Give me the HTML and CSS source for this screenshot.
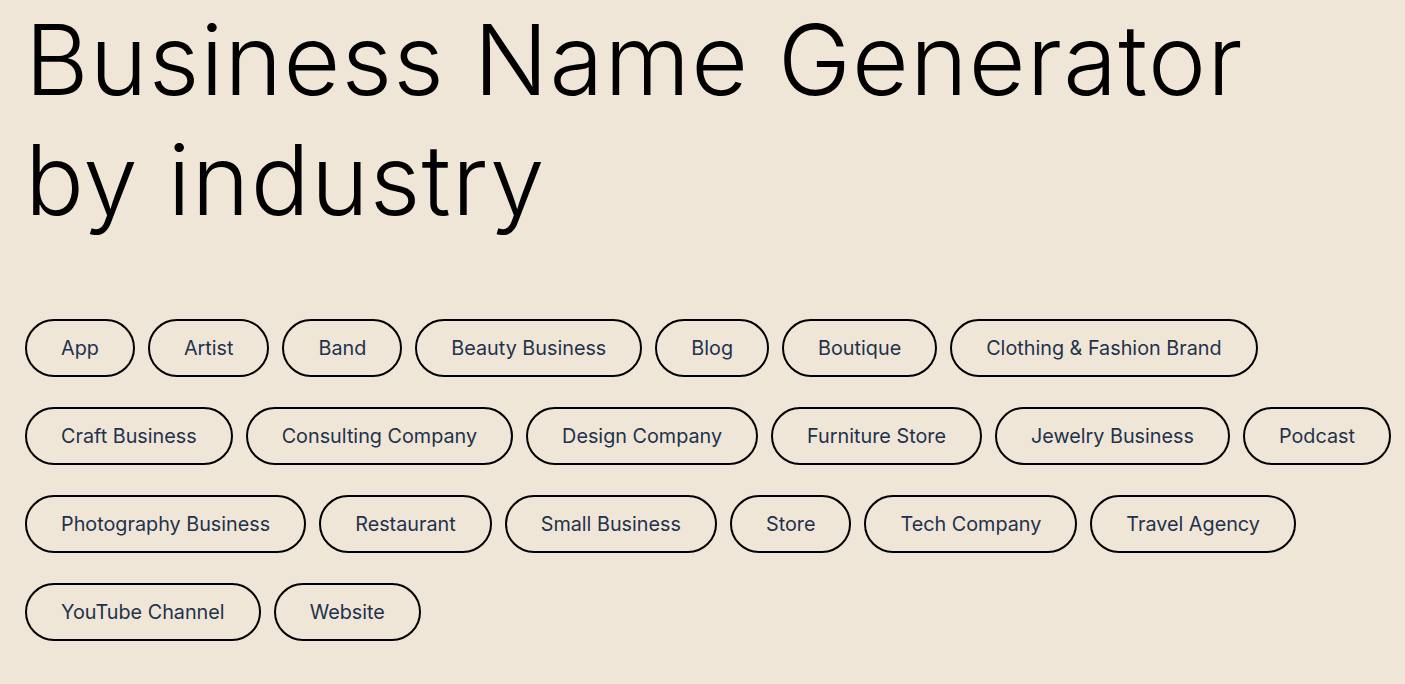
FILE: index.html
```html
<!DOCTYPE html>
<html lang="en">
<head>
<meta charset="utf-8">
<title>Business Name Generator by industry</title>
<link rel="stylesheet" href="styles.css">
</head>
<body>
<main class="page">
  <h1 class="title">Business Name Generator<br>by industry</h1>
  <ul class="tags">
    <li><a class="tag" href="#">App</a></li>
    <li><a class="tag" href="#">Artist</a></li>
    <li><a class="tag" href="#">Band</a></li>
    <li><a class="tag" href="#">Beauty Business</a></li>
    <li><a class="tag" href="#">Blog</a></li>
    <li><a class="tag" href="#">Boutique</a></li>
    <li><a class="tag" href="#">Clothing &amp; Fashion Brand</a></li>
    <li><a class="tag" href="#">Craft Business</a></li>
    <li><a class="tag" href="#">Consulting Company</a></li>
    <li><a class="tag" href="#">Design Company</a></li>
    <li><a class="tag" href="#">Furniture Store</a></li>
    <li><a class="tag" href="#">Jewelry Business</a></li>
    <li><a class="tag" href="#">Podcast</a></li>
    <li><a class="tag" href="#">Photography Business</a></li>
    <li><a class="tag" href="#">Restaurant</a></li>
    <li><a class="tag" href="#">Small Business</a></li>
    <li><a class="tag" href="#">Store</a></li>
    <li><a class="tag" href="#">Tech Company</a></li>
    <li><a class="tag" href="#">Travel Agency</a></li>
    <li><a class="tag" href="#">YouTube Channel</a></li>
    <li><a class="tag" href="#">Website</a></li>
  </ul>
</main>
</body>
</html>
```

FILE: styles.css
```css
html, body {
  margin: 0;
  padding: 0;
  background: #efe6d8;
}
body {
  font-family: Inter, "Noto Sans", sans-serif;
  color: #000;
}
.page {
  padding: 0 12px 0 25px;
}
.title {
  margin: 0;
  font-family: Inter, sans-serif;
  font-weight: 300;
  font-size: 98px;
  line-height: 120px;
  letter-spacing: 1.2px;
}
.tags {
  list-style: none;
  margin: 79px 0 0;
  padding: 0;
  display: flex;
  flex-wrap: wrap;
  column-gap: 13px;
  row-gap: 30px;
}
.tag {
  display: block;
  box-sizing: border-box;
  height: 58px;
  padding: 0 34px;
  border: 2px solid #000;
  border-radius: 29px;
  font-size: 19.8px;
  line-height: 54px;
  color: #22324a;
  text-decoration: none;
}
```
